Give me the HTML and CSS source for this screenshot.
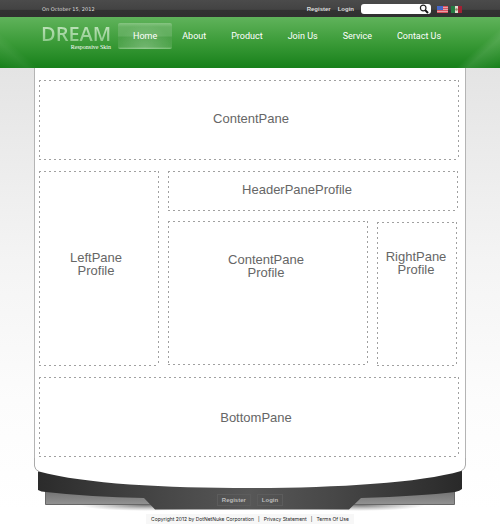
FILE: index.html
```html
<!DOCTYPE html>
<html lang="en">
<head>
<meta charset="utf-8">
<title>Dream Responsive Skin</title>
<link rel="stylesheet" href="styles.css">
</head>
<body>
<div class="topbar">
  <span class="date">On October 15, 2012</span>
  <div class="tools">
    <a class="user-link" href="#">Register</a>
    <a class="user-link" href="#">Login</a>
    <form class="search">
      <input type="search" aria-label="Search">
      <button type="button" aria-label="Search">
        <svg viewBox="0 0 10 10"><circle cx="4.2" cy="4" r="2.8" fill="none" stroke="#222" stroke-width="1.2"/><path d="M6.2 6.1 9 9" stroke="#111" stroke-width="2"/></svg>
      </button>
    </form>
    <a class="flag" href="#" aria-label="English">
      <svg viewBox="0 0 11 7"><path fill="#e8a0a8" d="M0 0h11v7H0z"/><path stroke="#d8505e" d="M0 .5h11M0 2.5h11M0 4.5h11M0 6.5h11"/><path fill="#4668c8" d="M0 0h6v4H0z"/></svg>
    </a>
    <a class="flag" href="#" aria-label="Spanish">
      <svg viewBox="0 0 11 7"><path fill="#257b43" d="M0 0h4v7H0z"/><path fill="#dedbd0" d="M4 0h3v7H4z"/><path fill="#a32135" d="M7 0h4v7H7z"/><circle cx="5.5" cy="3.5" r="1.3" fill="#8f8965"/></svg>
    </a>
  </div>
</div>
<header class="header">
  <a class="logo" href="#"><span class="logo-name">DREAM</span><span class="logo-sub">Responsive Skin</span></a>
  <nav class="nav">
    <a class="active" href="#">Home</a>
    <a href="#">About</a>
    <a href="#">Product</a>
    <a href="#">Join Us</a>
    <a href="#">Service</a>
    <a href="#">Contact Us</a>
  </nav>
</header>
<main class="page">
  <section class="pane pane-wide">ContentPane</section>
  <div class="profile">
    <section class="pane pane-left">LeftPane<br>Profile</section>
    <div class="profile-main">
      <section class="pane pane-header">HeaderPaneProfile</section>
      <div class="profile-row">
        <section class="pane pane-content">ContentPane<br>Profile</section>
        <section class="pane pane-right">RightPane<br>Profile</section>
      </div>
    </div>
  </div>
  <section class="pane pane-wide pane-bottom">BottomPane</section>
</main>
<footer class="footer">
  <div class="base">
    <svg class="base-art" viewBox="0 0 500 56" preserveAspectRatio="none" aria-hidden="true">
      <defs>
        <linearGradient id="band"><stop offset="0" stop-color="#2b2b2b"/><stop offset=".3" stop-color="#474747"/><stop offset=".5" stop-color="#575757"/><stop offset=".7" stop-color="#474747"/><stop offset="1" stop-color="#292929"/></linearGradient>
        <linearGradient id="strip" x2="0" y2="1"><stop offset="0" stop-color="#707070"/><stop offset="1" stop-color="#929292"/></linearGradient>
        <radialGradient id="shade"><stop offset="0" stop-color="#555" stop-opacity=".8"/><stop offset="1" stop-color="#777" stop-opacity="0"/></radialGradient>
      </defs>
      <ellipse cx="145" cy="47" rx="65" ry="6" fill="url(#shade)"/>
      <ellipse cx="360" cy="47" rx="65" ry="6" fill="url(#shade)"/>
      <path d="M45.5 32V46.5H154V32zM454.5 32V46.5H346V32z" fill="url(#strip)" stroke="#666"/>
      <path d="M38 10V32Q41 34 46 34Q90 39 144 40L155 51.5H349L361 40Q420 38 455 34Q460 33 462 31V10z" fill="url(#band)"/>
      <path d="M34.5 0V8Q35 12 39 13.5C85 26 165 30 250 30S420 25 461 13Q465.5 11 465.5 7V0z" fill="#fff"/>
      <path d="M34.5 0V8Q35 12 39 13.5M461 13Q465.5 11 465.5 7V0" fill="none" stroke="#aaa"/>
    </svg>
    <div class="base-links"><a href="#">Register</a><a href="#">Login</a></div>
  </div>
  <p class="legal"><span>Copyright 2012 by DotNetNuke Corporation</span><span>|</span><a href="#">Privacy Statement</a><span>|</span><a href="#">Terms Of Use</a></p>
</footer>
</body>
</html>
```
FILE: styles.css
```css
* { box-sizing: border-box; }
body {
  min-height: 100vh;
  margin: 0;
  font-family: "Liberation Sans", Arial, sans-serif;
  background: linear-gradient(#e4e4e4 68px, #f4f4f4 260px, #fcfcfc 400px, #fff 510px) no-repeat;
}
a { color: inherit; text-decoration: none; }
svg { display: block; }

.topbar {
  display: flex;
  justify-content: space-between;
  align-items: center;
  height: 17px;
  padding: 1px 38px 0 42px;
  color: #ddd;
  background: linear-gradient(#4b4b4b, #434343 55%, #323232 60%, #303030);
}
.date { font: 5px "DejaVu Sans", sans-serif; }
.tools { display: flex; align-items: center; }
.user-link { margin-right: 7px; font-size: 6px; font-weight: bold; }
.search {
  display: flex;
  align-items: center;
  width: 70px;
  height: 10px;
  margin-right: 6px;
  background: #fff;
  border-radius: 3px;
}
.search input {
  flex: 1;
  min-width: 0;
  height: 10px;
  padding: 0 3px;
  border: 0;
  outline: 0;
  background: none;
  font-size: 7px;
}
.search button { width: 12px; padding: 0 2px 0 0; border: 0; background: none; }
.flag { width: 11px; margin-left: 3px; }
.search + .flag { margin-left: 0; }

.header {
  display: flex;
  align-items: flex-start;
  height: 51px;
  padding: 6px 34px 0 41px;
  color: #fff;
  background:
    linear-gradient(138deg, transparent 92%, rgba(255,255,255,.1) 94%, transparent),
    linear-gradient(222deg, transparent 93%, rgba(255,255,255,.05) 95%, transparent),
    linear-gradient(#60b35b, #3b9b38 50%, #17801a);
}
.logo { flex: none; width: 77px; }
.logo-name {
  display: block;
  font: 600 20px/21px "Open Sans", sans-serif;
  color: transparent;
  background: linear-gradient(#b8dfb5 25%, #86c683);
  background-clip: text;
  -webkit-background-clip: text;
}
.logo-sub {
  display: block;
  padding-right: 7px;
  font: 6px/7px "Liberation Serif", serif;
  text-align: right;
}
.nav { display: flex; gap: 1px; font: 9px/26px Roboto, sans-serif; }
.nav a { padding: 0 12px; white-space: nowrap; }
.nav .active {
  margin-right: -3px;
  padding: 0 15px;
  border-radius: 2px;
  background:
    radial-gradient(ellipse at bottom, rgba(255,255,255,.2), transparent 70%),
    linear-gradient(#86c582, #68b264 15%, #61ae5e 50%, #4ca149 54%, #4fa44c 92%, #86c582);
}

.page {
  margin: 0 34px;
  padding: 12px 6px 1px 4px;
  border: solid #b4b4b4;
  border-width: 0 1px;
  background: #fff;
}
.pane {
  color: #666;
  font-size: 13px;
  line-height: 13px;
  text-align: center;
  background:
    repeating-linear-gradient(90deg, #a0a0a0 0 2px, transparent 2px 5px) top / 100% 1px no-repeat,
    repeating-linear-gradient(90deg, #a0a0a0 0 2px, transparent 2px 5px) bottom / 100% 1px no-repeat,
    repeating-linear-gradient(#a0a0a0 0 2px, transparent 2px 5px) left / 1px 100% no-repeat,
    repeating-linear-gradient(#a0a0a0 0 2px, transparent 2px 5px) right / 1px 100% no-repeat;
}
.pane-wide { height: 80px; padding: 32px 0 0 4px; }
.pane-bottom { padding: 34px 0 0 14px; }
.profile { display: flex; gap: 9px; margin: 11px 0; }
.pane-left { width: 120px; padding: 80px 6px 0 0; }
.profile-main { flex: 1; padding-right: 1px; }
.pane-header { height: 40px; padding: 12px 32px 0 0; }
.profile-row { display: flex; gap: 9px; margin-top: 10px; }
.pane-content { flex: 1; height: 144px; padding: 32px 4px 0 0; }
.pane-right { width: 80px; height: 144px; margin: 1px 1px 0 0; padding: 28px 2px 0 0; }

.base { display: grid; }
.base > * { grid-area: 1 / 1; }
.base-art { width: 100%; height: 56px; }
.base-links {
  display: flex;
  align-self: end;
  justify-content: center;
  gap: 6px;
  margin-bottom: 8px;
  color: #bbb;
  font-size: 6px;
  line-height: 10px;
  font-weight: bold;
}
.base-links a { padding: 0 4px; border: 1px solid #5c5c5c; }
.legal {
  display: flex;
  gap: 4px;
  width: fit-content;
  margin: 0 auto;
  padding: 0 5px;
  color: #222;
  font: 5px/10px Inter, sans-serif;
  background: #f7f7f7;
}
```
